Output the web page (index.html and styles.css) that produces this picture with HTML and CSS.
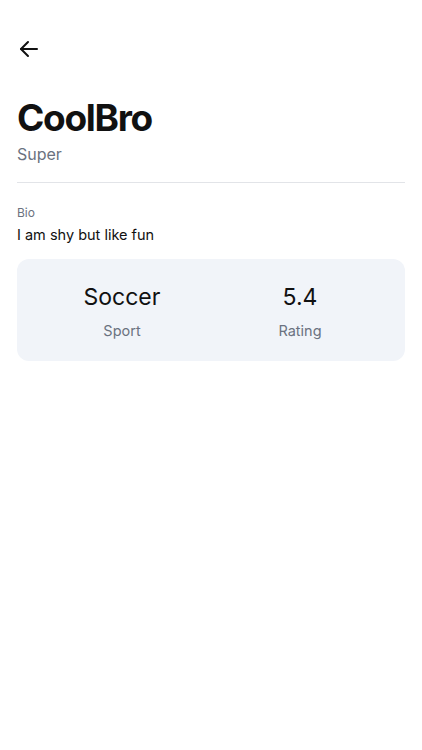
FILE: index.html
```html
<!DOCTYPE html>
<html lang="en">
<head>
  <meta charset="UTF-8" />
  <meta name="viewport" content="width=device-width, initial-scale=1" />
  <title>CoolBro</title>
  <link rel="stylesheet" href="styles.css">
</head>
<body>

<div class="page">
  <button class="back" aria-label="Back">
    <svg width="24" height="24" viewBox="0 0 24 24" fill="none" stroke="#111" stroke-width="2" stroke-linecap="round" stroke-linejoin="round">
      <path d="M20 12H4" />
      <path d="M11 5l-7 7 7 7" />
    </svg>
  </button>

  <h1 class="name">CoolBro</h1>
  <div class="tagline">Super</div>

  <hr class="divider" />

  <div class="label">Bio</div>
  <p class="bio">I am shy but like fun</p>

  <div class="stats">
    <div class="stat">
      <div class="value">Soccer</div>
      <div class="caption">Sport</div>
    </div>
    <div class="stat">
      <div class="value">5.4</div>
      <div class="caption">Rating</div>
    </div>
  </div>
</div>

</body>
</html>
```

FILE: styles.css
```css
body, html {
  margin: 0;
  padding: 0;
  background: #fff;
  font-family: 'Inter', 'Lato', sans-serif;
  color: #111;
}

.page {
  padding: 37px 17px 0 17px;
}

.back {
  display: block;
  background: none;
  border: none;
  padding: 0;
  width: 24px;
  height: 24px;
  cursor: pointer;
}

.name {
  margin: 35px 0 0 0;
  font-size: 37px;
  font-weight: 700;
  line-height: 44px;
  letter-spacing: -1.3px;
}

.tagline {
  margin-top: 3px;
  font-size: 16px;
  color: #6b7280;
  line-height: 22px;
}

.divider {
  border: none;
  border-top: 1px solid #e2e4e8;
  margin: 17px 0 0 0;
}

.label {
  margin-top: 22px;
  font-size: 12px;
  color: #6b7280;
  line-height: 16px;
}

.bio {
  margin: 4px 0 0 0;
  font-size: 14.5px;
  line-height: 20px;
}

.stats {
  margin-top: 14px;
  background: #f1f4f9;
  border-radius: 12px;
  padding: 22px 16px 20px 16px;
  display: grid;
  grid-template-columns: 1fr 1fr;
}

.stat {
  text-align: center;
}

.value {
  font-size: 23px;
  line-height: 32px;
}

.caption {
  margin-top: 8px;
  font-size: 14.5px;
  color: #6b7280;
  line-height: 20px;
}
```
